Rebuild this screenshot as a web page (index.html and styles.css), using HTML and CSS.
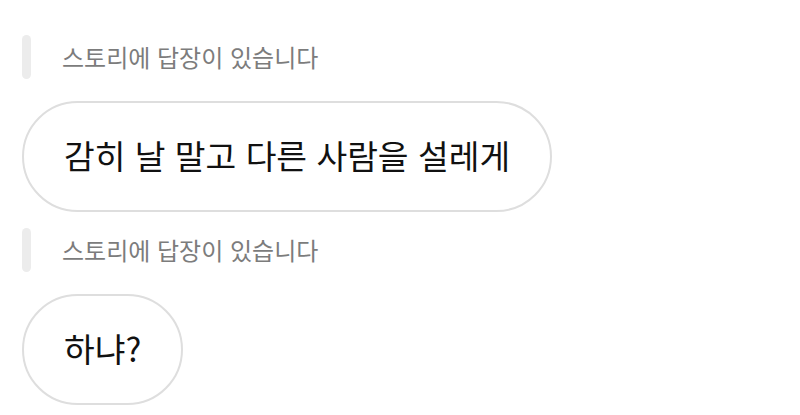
FILE: index.html
```html
<!DOCTYPE html>
<html lang="ko">
<head>
    <meta charset="UTF-8">
    <meta name="viewport" content="width=device-width, initial-scale=1.0">
    <title>Story Replies</title>
    <link rel="stylesheet" href="styles.css">
</head>
<body>
    <div class="thread">
        <div class="reply">
            <div class="reply-label">
                <span class="reply-bar"></span>
                <span class="reply-text">스토리에 답장이 있습니다</span>
            </div>
            <div class="bubble">감히 날 말고 다른 사람을 설레게</div>
        </div>
        <div class="reply">
            <div class="reply-label">
                <span class="reply-bar"></span>
                <span class="reply-text">스토리에 답장이 있습니다</span>
            </div>
            <div class="bubble">하냐?</div>
        </div>
    </div>
</body>
</html>
```

FILE: styles.css
```css
body {
    margin: 0;
    background: #fff;
    font-family: "Noto Sans CJK KR", "Noto Sans", sans-serif;
}
.thread {
    padding: 35px 22px 0;
    display: flex;
    flex-direction: column;
    gap: 16px;
}
.reply {
    display: flex;
    flex-direction: column;
    align-items: flex-start;
    gap: 22px;
}
.reply-label {
    display: flex;
    align-items: center;
    gap: 31px;
}
.reply-bar {
    width: 9px;
    height: 44px;
    border-radius: 5px;
    background: #ececec;
}
.reply-text {
    font-size: 24px;
    color: #7c7c7c;
    padding-bottom: 2px;
}
.bubble {
    box-sizing: border-box;
    height: 111px;
    display: flex;
    align-items: center;
    padding: 0 40px 4px;
    border: 2px solid #dedede;
    border-radius: 56px;
    font-size: 33.4px;
    color: #111;
}
```
